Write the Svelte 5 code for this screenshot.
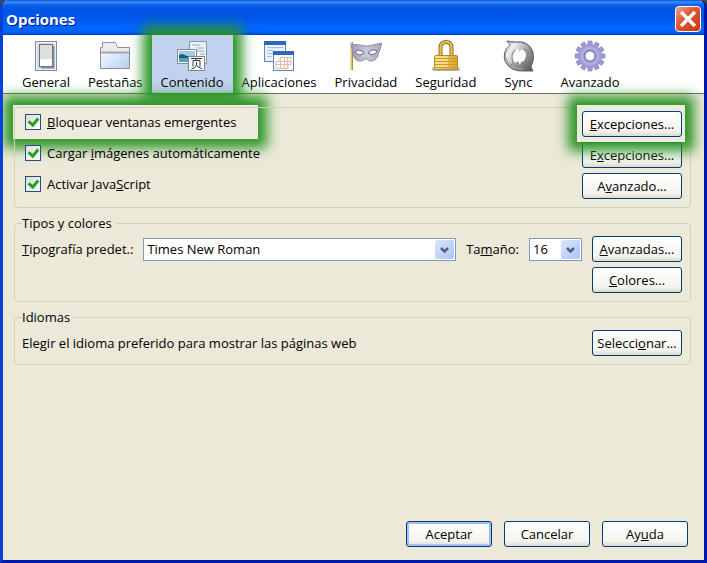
<script lang="ts">
  const tabs = [
    { id: "general", label: "General" },
    { id: "tabs", label: "Pestañas" },
    { id: "content", label: "Contenido" },
    { id: "applications", label: "Aplicaciones" },
    { id: "privacy", label: "Privacidad" },
    { id: "security", label: "Seguridad" },
    { id: "sync", label: "Sync" },
    { id: "advanced", label: "Avanzado" },
  ];

  let selected = $state("content");
  let blockPopups = $state(true);
  let loadImages = $state(true);
  let enableScript = $state(true);
  let font = $state("Times New Roman");
  let size = $state("16");

  const teeth = [0, 30, 60, 90, 120, 150, 180, 210, 240, 270, 300, 330];
</script>

{#snippet icon(id: string)}
  <svg class="icon" viewBox="0 0 32 32" aria-hidden="true">
    {#if id === "general"}
      <rect x="5.5" y="1.5" width="21" height="29" fill="#d3dcea" stroke="#858b95" />
      <rect x="6.5" y="2.5" width="19" height="27" fill="none" stroke="#eef2f9" />
      <path d="M11 27.5h12.500V6" fill="none" stroke="#7b8fae" stroke-width="2" />
      <rect x="9.500" y="4.500" width="13" height="22" fill="#fff" stroke="#6f747c" />
      <rect x="10" y="5" width="12" height="14" fill="#dededd" />
    {:else if id === "tabs"}
      <path d="M1.500 28.500V7.500h2V2.500h13l2 5h12v21z" fill="url(#folder)" stroke="#8b8f97" />
      <path d="M2 8h2V3h12l2 5h12v4H2z" fill="#ebebeb" />
      <path d="M2 12.500h28" stroke="#a2a5aa" stroke-width="2" />
    {:else if id === "content"}
      <path d="M13.500 1.500h17v22h-17z" fill="#eef1f7" stroke="#8d95a3" />
      <path d="M16 5h8M21 8h7M21 11h7M24 14h5" stroke="#9aa3b5" />
      <rect x="1.500" y="9.500" width="19" height="14" fill="#fff" stroke="#7f8da3" />
      <rect x="3" y="11" width="16" height="11" fill="#9ecbe8" />
      <path d="M3 17h16v5H3z" fill="#4fa5b5" />
      <path d="M3 15l3-1 5 2 8 1v1H3z" fill="#1d5b7e" />
      <rect x="12.500" y="16.500" width="16" height="14" fill="#fff" stroke="#7c8496" />
      <path d="M15 18.500h11M20.500 18.500l-1 2M17 20.500h7v6M17 20.500v6M20.500 22v3q-1 3-5 4M21 26l5 3" fill="none" stroke="#2d3340" />
    {:else if id === "applications"}
      <rect x="1.500" y="1.500" width="21" height="20" fill="#eaf3fd" stroke="#5f86c4" />
      <path d="M1 1h22v4H1z" fill="#2f68b8" />
      <path d="M4 7.500h16M4 10.500h6M4 13.500h6M4 16.500h5" stroke="#a7bfe0" />
      <rect x="10.500" y="11.500" width="20" height="19" fill="#fafcff" stroke="#5f86c4" />
      <path d="M10 11h21v4H10z" fill="#2f68b8" />
      <path d="M17 17.500h11v7h-3v4H13v-7h4zM13 21.500h15M13 24.500h12M17.500 17v11M21.500 17v11M24.500 17v11" fill="none" stroke="#e6bd9f" />
    {:else if id === "privacy"}
      <path d="M1.500 2v28" stroke="#e3c26c" stroke-width="2" />
      <path d="M2.500 2v28" stroke="#b58d38" />
      <path d="M1 5q4-1 9 0 3 1 6.500 1T23 5q4-1 9-2-1 3-3 9-2 9-8 9-3 0-4-2-1-1-2 0-2 2-5 2-6 0-7-8-1-5-2-8z" fill="url(#mask)" stroke="#8a8aa6" />
      <path d="M5 12q5-4 9 1-5 4-9-1zM18 13q4-5 9-2-3 6-9 2z" fill="#fff" stroke="#69687e" />
    {:else if id === "security"}
      <path d="M10.500 16V8q0-6 5.500-6t5.500 6v8" fill="none" stroke="#94701c" stroke-width="4" />
      <path d="M10.500 16V8q0-6 5.500-6t5.500 6v8" fill="none" stroke="#e9c45a" stroke-width="2" />
      <rect x="2" y="27" width="28" height="4" rx="2" fill="#b5b5b2" />
      <rect x="4.500" y="15.500" width="23" height="14" rx="1" fill="url(#brass)" stroke="#b58a28" />
      <path d="M5 18.500h22M5 21.500h22M5 24.500h22M5 27.500h22" stroke="#c99a2e" />
      <path d="M6 17h12M6 20h12M6 23h12M6 26h12" stroke="#fff0a8" />
    {:else if id === "sync"}
      <path
        d="M4 1l8 1Q26 0 30 12q2 7-2 15l2 4-9 0Q7 32 2 21-1 12 7 5z"
        fill="url(#steelDark)"
        stroke="#606467"
      />
      <path
        d="M4 1.500l8 1Q26 1 29 13l-3 1q-2-5-6-5l-3 5-5-4q-5 4-2 12l-2 4Q0 19 3 10q1-3 4-5z"
        fill="url(#steel)"
        stroke="#75797c"
        stroke-width=".7"
      />
      <path d="M13 10l2-2 1 4 3-3q4 2 4 7l-2 5-3 1-1 3-2-4-3 2q-3-4-2-8z" fill="#fff" />
      <path d="M8 26q5 4 12 3" fill="none" stroke="#a9acae" />
    {:else}
      <g fill="#9d9ad3" stroke="#8582bd" stroke-width=".6">
        {#each teeth as angle}
          <path d="M13.500 6l.5-5h4l.5 5z" transform="rotate({angle} 16 16)" />
        {/each}
        <circle cx="16" cy="16" r="11.500" stroke="none" />
      </g>
      <circle cx="16" cy="16" r="9.500" fill="#b1aee0" />
      <circle cx="16" cy="16" r="5.500" fill="#fff" stroke="#8481c0" stroke-width="2" />
    {/if}
  </svg>
{/snippet}

{#snippet arrow()}
  <svg class="arrow" viewBox="0 0 19 19" aria-hidden="true">
    <rect width="19" height="19" rx="2" fill="url(#arrowFill)" />
    <path d="M6 8l3.500 3.500L13 8" fill="none" stroke="#4d6185" stroke-width="2.500" />
  </svg>
{/snippet}

<svg class="defs" width="0" height="0" aria-hidden="true">
  <defs>
    <linearGradient id="folder" x2="1" y2="1">
      <stop offset=".3" stop-color="#eef3fc" />
      <stop offset="1" stop-color="#b3cbf2" />
    </linearGradient>
    <linearGradient id="mask" x2="1">
      <stop offset="0" stop-color="#9a9ab8" />
      <stop offset=".5" stop-color="#c9c9dc" />
      <stop offset="1" stop-color="#a5a5bc" />
    </linearGradient>
    <linearGradient id="brass" x2="1">
      <stop offset="0" stop-color="#f9dc78" />
      <stop offset="1" stop-color="#dba52b" />
    </linearGradient>
    <linearGradient id="steel" x2="1" y2=".6">
      <stop offset="0" stop-color="#a4a7a9" />
      <stop offset=".3" stop-color="#eeefef" />
      <stop offset="1" stop-color="#74787a" />
    </linearGradient>
    <linearGradient id="steelDark" x2="1" y2="1">
      <stop offset=".3" stop-color="#c9cbcc" />
      <stop offset="1" stop-color="#4c5053" />
    </linearGradient>
    <linearGradient id="arrowFill" x2="1" y2="1">
      <stop offset="0" stop-color="#dbe5fd" />
      <stop offset="1" stop-color="#adc4f6" />
    </linearGradient>
  </defs>
</svg>

<div class="window">
  <header>
    <h1>Opciones</h1>
    <button class="close" aria-label="Cerrar">
      <svg viewBox="0 0 24 24" aria-hidden="true">
        <path d="M5 5l14 14M19 5L5 19" stroke="#fff" stroke-width="3.500" />
      </svg>
    </button>
  </header>

  <nav>
    {#each tabs as tab}
      <button
        class="tab"
        class:selected={selected === tab.id}
        onclick={() => (selected = tab.id)}
      >
        {@render icon(tab.id)}
        <span>{tab.label}</span>
      </button>
    {/each}
  </nav>

  <main>
    <fieldset class="content">
      <div class="row">
        <label class="check highlight">
          <input type="checkbox" bind:checked={blockPopups} />
          <span><u>B</u>loquear ventanas emergentes</span>
        </label>
        <span class="highlight-button">
          <button class="button wide"><u>E</u>xcepciones...</button>
        </span>
      </div>
      <div class="row">
        <label class="check">
          <input type="checkbox" bind:checked={loadImages} />
          <span>Cargar <u>i</u>mágenes automáticamente</span>
        </label>
        <button class="button wide">E<u>x</u>cepciones...</button>
      </div>
      <div class="row">
        <label class="check">
          <input type="checkbox" bind:checked={enableScript} />
          <span>Activar Java<u>S</u>cript</span>
        </label>
        <button class="button wide">A<u>v</u>anzado...</button>
      </div>
    </fieldset>

    <fieldset>
      <legend>Tipos y colores</legend>
      <div class="row">
        <label for="font"><u>T</u>ipografía predet.:</label>
        <div class="select grow">
          <select id="font" bind:value={font}>
            <option>Times New Roman</option>
            <option>Arial</option>
            <option>Verdana</option>
          </select>
          {@render arrow()}
        </div>
        <label for="size">Ta<u>m</u>año:</label>
        <div class="select size">
          <select id="size" bind:value={size}>
            <option>14</option>
            <option>16</option>
            <option>18</option>
          </select>
          {@render arrow()}
        </div>
        <button class="button"><u>A</u>vanzadas...</button>
      </div>
      <div class="row end">
        <button class="button"><u>C</u>olores...</button>
      </div>
    </fieldset>

    <fieldset>
      <legend>Idiomas</legend>
      <div class="row">
        <span>Elegir el idioma preferido para mostrar las páginas web</span>
        <button class="button">Selecci<u>o</u>nar...</button>
      </div>
    </fieldset>
  </main>

  <footer>
    <button class="button default">Aceptar</button>
    <button class="button">Cancelar</button>
    <button class="button">Ay<u>u</u>da</button>
  </footer>
</div>

<style>
  :global(body) {
    margin: 0;
    background: #3c4a50;
  }

  .defs {
    position: absolute;
  }

  .window,
  .window button,
  .window select {
    font-family: "Open Sans", "Noto Sans", sans-serif;
    font-size: 13px;
    line-height: 18px;
    color: #000;
  }

  .window {
    --glow: 0 0 12px 9px #2a9426;
    box-sizing: border-box;
    display: flex;
    flex-direction: column;
    min-height: 100vh;
    border: solid #0a3fd8;
    border-width: 0 3px 3px;
    border-right-color: #0019a8;
    border-bottom-color: #0019a8;
    border-radius: 8px 8px 0 0;
    background: #ece9d8;
    overflow: hidden;
  }

  header {
    display: flex;
    align-items: center;
    justify-content: space-between;
    height: 35px;
    margin: 0 -3px;
    padding: 3px 6px 0 6px;
    box-sizing: border-box;
    background: linear-gradient(
      #0b4fd6 0,
      #3b92ff 2px,
      #0a5ee8 5px,
      #0054e3 12px,
      #0058ee 20px,
      #0066ff 28px,
      #0060fa 32px,
      #0040c8 35px
    );
  }

  h1 {
    margin: 0;
    color: #fff;
    font-size: 15px;
    font-weight: 700;
    text-shadow: 1px 1px #0f1089;
  }

  .close {
    width: 26px;
    height: 26px;
    padding: 0;
    border: 1px solid #fff;
    border-radius: 4px;
    background: linear-gradient(135deg, #f0a088, #e0532c 45%, #c83a14);
  }

  .close svg {
    display: block;
    width: 24px;
    height: 24px;
  }

  nav {
    display: flex;
    padding: 0 10px;
    border-bottom: 1px solid #6c6c66;
    background: #fff;
  }

  .tab {
    display: flex;
    flex-direction: column;
    align-items: center;
    gap: 1px;
    min-width: 66px;
    padding: 5px 9px 2px;
    border: 0;
    background: none;
  }

  .tab.selected {
    position: relative;
    background: #c1d2ee;
    box-shadow: var(--glow);
  }

  .icon {
    width: 32px;
    height: 32px;
  }

  main {
    position: relative;
    z-index: 1;
    display: flex;
    flex-direction: column;
    gap: 6px;
    flex: 1;
    padding: 13px 13px 0 11px;
  }

  fieldset {
    display: flex;
    flex-direction: column;
    gap: 5px;
    min-width: 0;
    margin: 0;
    padding: 4px 8px 8px 7px;
    border: 1px solid #d0d0bf;
    border-radius: 4px;
  }

  .content {
    padding-top: 3px;
  }

  legend {
    padding: 0 4px 0 0;
  }

  .row {
    display: flex;
    align-items: center;
    justify-content: space-between;
    gap: 10px;
  }

  .row.end {
    justify-content: flex-end;
  }

  .check {
    position: relative;
    display: flex;
    align-items: center;
    gap: 6px;
    margin: 0 0 4px 3px;
  }

  .check input {
    appearance: none;
    width: 16px;
    height: 16px;
    margin: 0;
    border: 1px solid #1c5180;
    background: linear-gradient(135deg, #dcdcd7, #fff);
  }

  .check input:checked::before {
    content: "";
    display: block;
    width: 4px;
    height: 7px;
    margin: 1px 0 0 4px;
    border: solid #21a121;
    border-width: 0 3px 3px 0;
    transform: rotate(40deg);
  }

  .highlight::before {
    content: "";
    position: absolute;
    z-index: -1;
    inset: -8px -22px -8px -12px;
    background: #eeebdd;
    box-shadow: var(--glow);
  }

  .highlight-button {
    position: relative;
    z-index: 1;
  }

  .highlight-button::before {
    content: "";
    position: absolute;
    z-index: -1;
    inset: -6px -3px -5px -5px;
    background: #eeebdd;
    box-shadow: var(--glow);
    pointer-events: none;
  }

  .button {
    min-width: 90px;
    height: 26px;
    padding: 0 4px;
    border: 1px solid #003c74;
    border-radius: 3px;
    background: linear-gradient(#fff, #f4f3ee 80%, #dedacb);
    white-space: nowrap;
  }

  .button.wide {
    min-width: 100px;
  }

  .button.default {
    box-shadow: inset 0 0 0 2px #a3bff0;
  }

  .select {
    display: grid;
    align-items: center;
  }

  .select > :global(*) {
    grid-area: 1 / 1;
  }

  .select.grow {
    flex: 1;
  }

  .select.size {
    width: 53px;
  }

  select {
    appearance: none;
    width: 100%;
    height: 23px;
    padding: 0 22px 0 3px;
    border: 1px solid #7f9db9;
    border-radius: 0;
    background: #fff;
  }

  .arrow {
    justify-self: end;
    width: 19px;
    height: 19px;
    margin-right: 2px;
    pointer-events: none;
  }

  footer {
    display: flex;
    justify-content: flex-end;
    gap: 12px;
    padding: 12px 16px 13px;
  }

  footer .button {
    min-width: 86px;
  }
</style>
